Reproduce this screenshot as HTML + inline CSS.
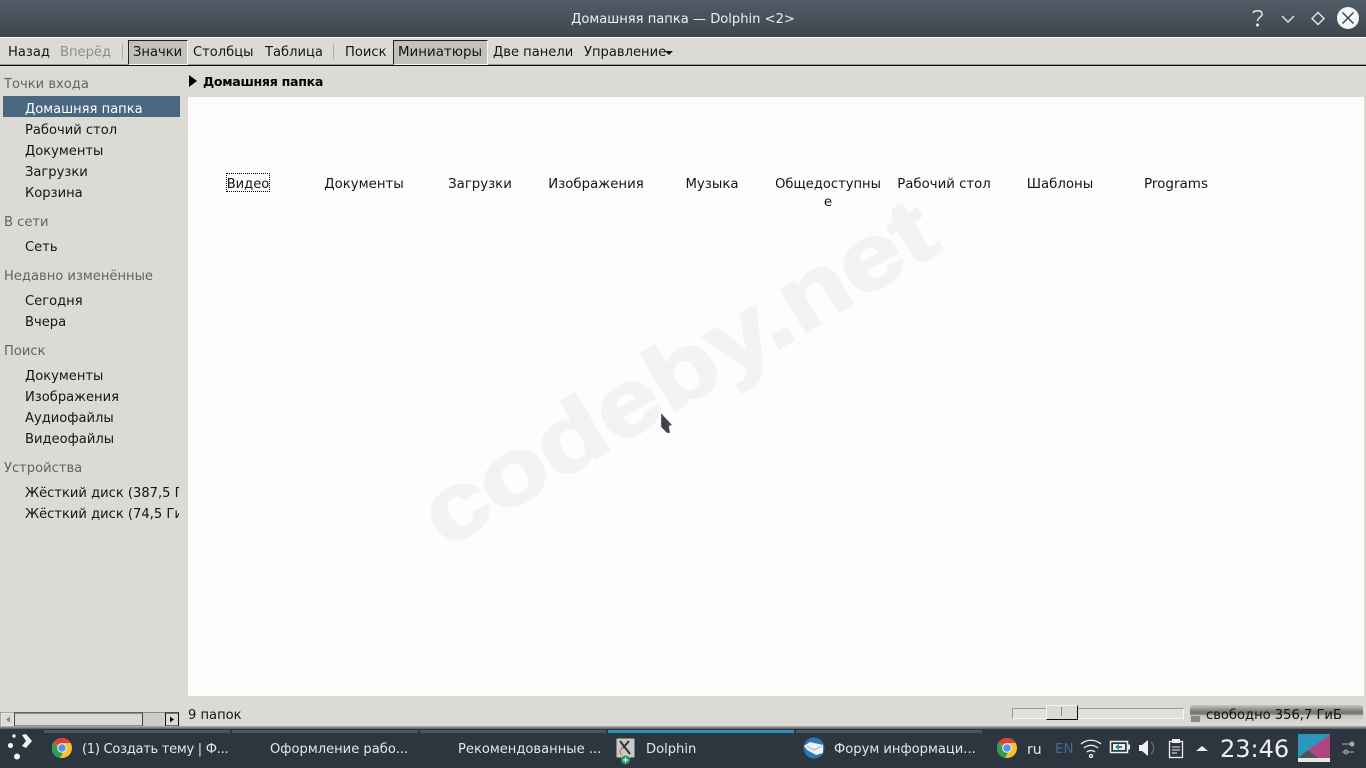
<!DOCTYPE html>
<html lang="ru"><head><meta charset="utf-8"><title>Домашняя папка — Dolphin</title>
<style>
html,body{margin:0;padding:0;width:1366px;height:768px;overflow:hidden;background:#dcdad5}
body{position:relative;font-family:"DejaVu Sans","Liberation Sans",sans-serif;font-size:13.1px;color:#151515}
.a{position:absolute;white-space:nowrap;line-height:18px;margin-top:1px}
.b{position:absolute}
.c{transform:translateX(-50%);font-size:13.3px}
.g{color:#64645f}
.t{color:#e4e7e9;top:740px}
</style></head><body>
<div class="b" style="left:0;top:0;width:1366px;height:37px;background:linear-gradient(#515c67,#3e464e)"></div>
<div class="a" style="left:0;width:1366px;text-align:center;top:10px;color:#eef0f1">Домашняя папка — Dolphin &lt;2&gt;</div>
<svg class="b" style="left:1240px;top:0" width="126" height="37" fill="none" stroke="#e8eaec" stroke-width="1.4">
<path d="M13 13c1-3 8-3 9 0 1 4-4 4-4.500 8"/><circle cx="17.500" cy="25" r=".8" fill="#e8eaec"/>
<path d="M42 16l6 6 6-6"/><path d="M78 12.500l6 6-6 6-6-6z"/>
<circle cx="108" cy="18" r="11" fill="#f4f5f5" stroke="none"/><path d="M102.500 12.500l11 11M113.500 12.500l-11 11" stroke="#3d454d" stroke-width="1.500"/></svg>

<div class="b" style="left:0;top:37px;width:1366px;height:1px;background:#fbfbfb"></div>
<div class="b" style="left:0;top:64px;width:1366px;height:1px;background:#9a9994"></div>
<div class="b" style="left:0;top:65px;width:1366px;height:1px;background:#111"></div>
<div class="b" style="left:128px;top:40px;width:58px;height:23px;background:#c2c1bc;border-top:1px solid #222;border-left:1px solid #222;border-right:1px solid #f5f5f5;border-bottom:1px solid #f5f5f5"></div>
<div class="b" style="left:393px;top:40px;width:93px;height:23px;background:#c2c1bc;border-top:1px solid #222;border-left:1px solid #222;border-right:1px solid #f5f5f5;border-bottom:1px solid #f5f5f5"></div>
<div class="b" style="left:122px;top:44px;width:1px;height:15px;background:#aaa"></div>
<div class="b" style="left:333px;top:44px;width:1px;height:15px;background:#aaa"></div>
<div class="a" style="left:8px;top:43px">Назад</div>
<div class="a" style="left:60px;top:43px;color:#8e8d89">Вперёд</div>
<div class="a" style="left:133px;top:43px">Значки</div>
<div class="a" style="left:193px;top:43px">Столбцы</div>
<div class="a" style="left:265px;top:43px">Таблица</div>
<div class="a" style="left:345px;top:43px">Поиск</div>
<div class="a" style="left:398px;top:43px;font-size:13.4px">Миниатюры</div>
<div class="a" style="left:493px;top:43px">Две панели</div>
<div class="a" style="left:584px;top:43px">Управление</div>
<div class="b" style="left:665px;top:51px;border:4px solid transparent;border-top-color:#111;border-bottom:0"></div>

<div class="a g" style="left:4px;top:75px">Точки входа</div>
<div class="b" style="left:3px;top:96px;width:177px;height:21px;background:#4a6782"></div>
<div class="a" style="left:25px;top:100px;color:#fff">Домашняя папка</div>
<div class="a" style="left:25px;top:121px">Рабочий стол</div>
<div class="a" style="left:25px;top:142px">Документы</div>
<div class="a" style="left:25px;top:163px">Загрузки</div>
<div class="a" style="left:25px;top:184px">Корзина</div>
<div class="a g" style="left:4px;top:213px">В сети</div>
<div class="a" style="left:25px;top:238px">Сеть</div>
<div class="a g" style="left:4px;top:267px">Недавно изменённые</div>
<div class="a" style="left:25px;top:292px">Сегодня</div>
<div class="a" style="left:25px;top:313px">Вчера</div>
<div class="a g" style="left:4px;top:342px">Поиск</div>
<div class="a" style="left:25px;top:367px">Документы</div>
<div class="a" style="left:25px;top:388px">Изображения</div>
<div class="a" style="left:25px;top:409px">Аудиофайлы</div>
<div class="a" style="left:25px;top:430px">Видеофайлы</div>
<div class="a g" style="left:4px;top:459px">Устройства</div>
<div class="b" style="left:25px;top:484px;width:154px;height:20px;overflow:hidden"><div class="a" style="left:0;top:0">Жёсткий диск (387,5 ГиБ)</div></div>
<div class="b" style="left:25px;top:505px;width:154px;height:20px;overflow:hidden"><div class="a" style="left:0;top:0">Жёсткий диск (74,5 ГиБ)</div></div>

<div class="b" style="left:189px;top:75px;border:6px solid transparent;border-left:8px solid #000;border-right:0"></div>
<div class="a" style="left:203px;top:72px;font-weight:bold;color:#000;font-size:12.6px;letter-spacing:-.3px">Домашняя папка</div>

<div class="b" style="left:188px;top:97px;width:1176px;height:599px;background:#fdfdfd"></div>
<svg class="b" style="left:188px;top:97px" width="1176" height="599"><text transform="translate(257,452) rotate(-31) scale(1.215,1)" font-family="Liberation Sans" font-weight="bold" font-size="92" fill="#f3f3f3" stroke="#f3f3f3" stroke-width="2.500">codeby.net</text></svg>
<div class="b" style="left:226px;top:173px;width:42px;height:17px;border:1px dotted #000"></div>
<div class="a c" style="left:248px;top:175px;font-size:13.1px">Видео</div>
<div class="a c" style="left:364px;top:175px">Документы</div>
<div class="a c" style="left:480px;top:175px">Загрузки</div>
<div class="a c" style="left:596px;top:175px">Изображения</div>
<div class="a c" style="left:712px;top:175px">Музыка</div>
<div class="a c" style="left:828px;top:175px;font-size:13.1px">Общедоступны</div>
<div class="a c" style="left:828px;top:193px">е</div>
<div class="a c" style="left:944px;top:175px">Рабочий стол</div>
<div class="a c" style="left:1060px;top:175px">Шаблоны</div>
<div class="a c" style="left:1176px;top:174px;font-size:13.5px">Programs</div>
<svg class="b" style="left:656px;top:408px" width="20" height="28"><path d="M5 5l11 12-3 1 1 7-3 0-6-6z" fill="#3f444a" stroke="#e8e8e8" stroke-width=".6" stroke-dasharray="1 1"/></svg>

<div class="a" style="left:188px;top:706px">9 папок</div>
<!-- horizontal scrollbar -->
<svg class="b" style="left:0;top:712px" width="180" height="15">
<rect x=".5" y=".5" width="178" height="14" fill="#cfcdc8" stroke="#8a8984"/>
<rect x="1" y="1" width="13" height="13" fill="#dcdad5" stroke="#fff" stroke-width=".5"/><path d="M6 7.500l4-3v6z" fill="#888"/>
<rect x="14.500" y="1" width="128" height="13" fill="#dcdad5" stroke="#444" stroke-width="1"/>
<rect x="165.500" y="1" width="13" height="13" fill="#dcdad5" stroke="#111"/><path d="M174 7.500l-4-3v6z" fill="#111"/></svg>
<!-- slider -->
<div class="b" style="left:1012px;top:708px;width:170px;height:9px;background:#e2e0db;border:1px solid #f5f5f5;border-top-color:#999;border-left-color:#999"></div>
<div class="b" style="left:1046px;top:705px;width:30px;height:13px;background:#dcdad5;border-right:1px solid #111;border-bottom:1px solid #111;border-top:1px solid #f5f5f5;border-left:1px solid #f5f5f5"></div>
<div class="b" style="left:1061px;top:707px;width:1px;height:9px;background:#888"></div>
<!-- free space -->
<div class="b" style="left:1190px;top:705px;width:173px;height:18px;border-radius:3px;background:linear-gradient(#c8c7c3,#73746f 40%,#a9a9a4 70%,#d6d5d0)"></div>
<div class="b" style="left:1190px;top:715px;width:173px;height:8px;background:linear-gradient(#c4c3bf,#dcdad5)"></div>
<div class="b" style="left:1191px;top:716px;width:9px;height:6px;background:#8a8a86"></div>
<div class="a" style="left:1206px;top:706px;color:#111">свободно 356,7 ГиБ</div>

<!-- taskbar -->
<div class="b" style="left:0;top:726px;width:1366px;height:3px;background:linear-gradient(#b5b3ae,#55595c)"></div>
<div class="b" style="left:0;top:729px;width:1366px;height:39px;background:#2d363e"></div>
<div class="b" style="left:44px;top:730px;width:186px;height:3px;background:#4a555c"></div>
<div class="b" style="left:232px;top:730px;width:186px;height:3px;background:#4a555c"></div>
<div class="b" style="left:420px;top:730px;width:186px;height:3px;background:#4a555c"></div>
<div class="b" style="left:608px;top:730px;width:186px;height:3px;background:#2a92b8"></div>
<div class="b" style="left:796px;top:730px;width:186px;height:3px;background:#4a555c"></div>
<svg class="b" style="left:0;top:729px" width="44" height="39" fill="#f0f2f3">
<circle cx="14" cy="7" r="1.700"/><circle cx="10.500" cy="16.500" r="2.600"/><circle cx="17" cy="27.500" r="3"/>
<path d="M22 6l4-1 6 7-6 7-4-2 4-5z"/></svg>
<svg width="0" height="0" style="position:absolute"><defs><g id="ch"><circle cx="10" cy="10" r="10" fill="#fbc02d"/><path d="M10 0a10 10 0 0 1 8.700 5H10a5 5 0 0 0-4.700 3.300L2 3.500A10 10 0 0 1 10 0z" fill="#db4437"/><path d="M2 3.500l4.500 8a5 5 0 0 0 4.500 3.300L8 20A10 10 0 0 1 2 3.500z" fill="#2e9e4f"/><circle cx="10" cy="10" r="4.800" fill="#f4f4f4"/><circle cx="10" cy="10" r="3.800" fill="#5b8ff0"/></g></defs></svg>
<svg class="b" style="left:52px;top:738px" width="20" height="20"><use href="#ch"/></svg>
<div class="a t" style="left:82px;letter-spacing:-.3px">(1) Создать тему | Ф...</div>
<div class="a t" style="left:270px">Оформление рабо...</div>
<div class="a t" style="left:458px">Рекомендованные ...</div>
<svg class="b" style="left:616px;top:738px" width="20" height="28"><rect x=".5" y=".5" width="18" height="19" rx="1" fill="#c9c9c5"/><path d="M4 3l10 13M13 3L7 10" stroke="#333" stroke-width="2" fill="none"/><path d="M6 10c-3 3-2 5 0 7" stroke="#c33" stroke-width="1.200" stroke-dasharray="1.500 1" fill="none"/><circle cx="9.500" cy="22" r="4.500" fill="#1c9a55"/><path d="M7 22h5M9.500 19.500v5" stroke="#fff" stroke-width="1.200"/></svg>
<div class="a t" style="left:646px">Dolphin</div>
<svg class="b" style="left:803px;top:737px" width="22" height="22"><circle cx="11" cy="11" r="10.500" fill="#2c76b8"/><path d="M1 9l6-4 13 3v8l-7 2-9-5z" fill="#f0f1f2"/><path d="M4 9l7 4 8-4" stroke="#a9b6c2" fill="none"/></svg>
<div class="a t" style="left:834px">Форум информаци...</div>
<svg class="b" style="left:997px;top:738px" width="20" height="20"><use href="#ch"/></svg>
<div class="a t" style="left:1027px;font-size:14px">ru</div>
<div class="a" style="left:1055px;top:739px;font-size:13.5px;color:#47688a">EN</div>
<svg class="b" style="left:1080px;top:738px" width="140" height="22" fill="none" stroke="#eef0f1" stroke-width="1.300">
<path d="M1 6c6-5 14-5 20 0M4 10c4-3.500 10-3.500 14 0M7 14c2-2 6-2 8 0"/><circle cx="11" cy="18" r="1.500"/>
<rect x="30.500" y="3.500" width="17" height="11" stroke-width="1.500"/><rect x="33" y="6" width="12" height="6" fill="#eef0f1" stroke="none"/><rect x="48" y="6.500" width="2" height="5" fill="#eef0f1" stroke="none"/><path d="M35 9l4-3v2h3v2h-3v2z" fill="#1f87a8" stroke="none"/>
<path d="M59 7h3l6-5v16l-6-5h-3z" fill="#eef0f1" stroke="none"/><path d="M71 4c3.500 3.500 3.500 8.500 0 12" stroke="#5f6b75"/>
<rect x="89.500" y="3.500" width="13" height="16"/><rect x="92" y="1" width="8" height="4" fill="#eef0f1" stroke="none"/><path d="M92 9h8M92 12h8M92 15h5" stroke-width="1"/>
<path d="M116 13l6-5 6 5z" fill="#eef0f1" stroke="none"/></svg>
<div class="a" style="left:1220px;top:734px;font-size:24px;line-height:28px;color:#eef0f1">23:46</div>
<svg class="b" style="left:1298px;top:734px" width="34" height="28"><rect width="32" height="28" fill="#2c97bb"/><path d="M32 1V24H20L10 16z" fill="#b2457f"/><path d="M0 24l10-8 10 8z" fill="#4c5459"/><rect y="24" width="32" height="4" fill="#e8e7e3"/></svg>
<svg class="b" style="left:1340px;top:740px" width="20" height="18" stroke="#a7adb2" fill="none"><path d="M2 4h12M2 12h12" /><circle cx="12" cy="4" r="2" fill="#a7adb2"/><circle cx="6" cy="12" r="2"/></svg>
</body></html>
